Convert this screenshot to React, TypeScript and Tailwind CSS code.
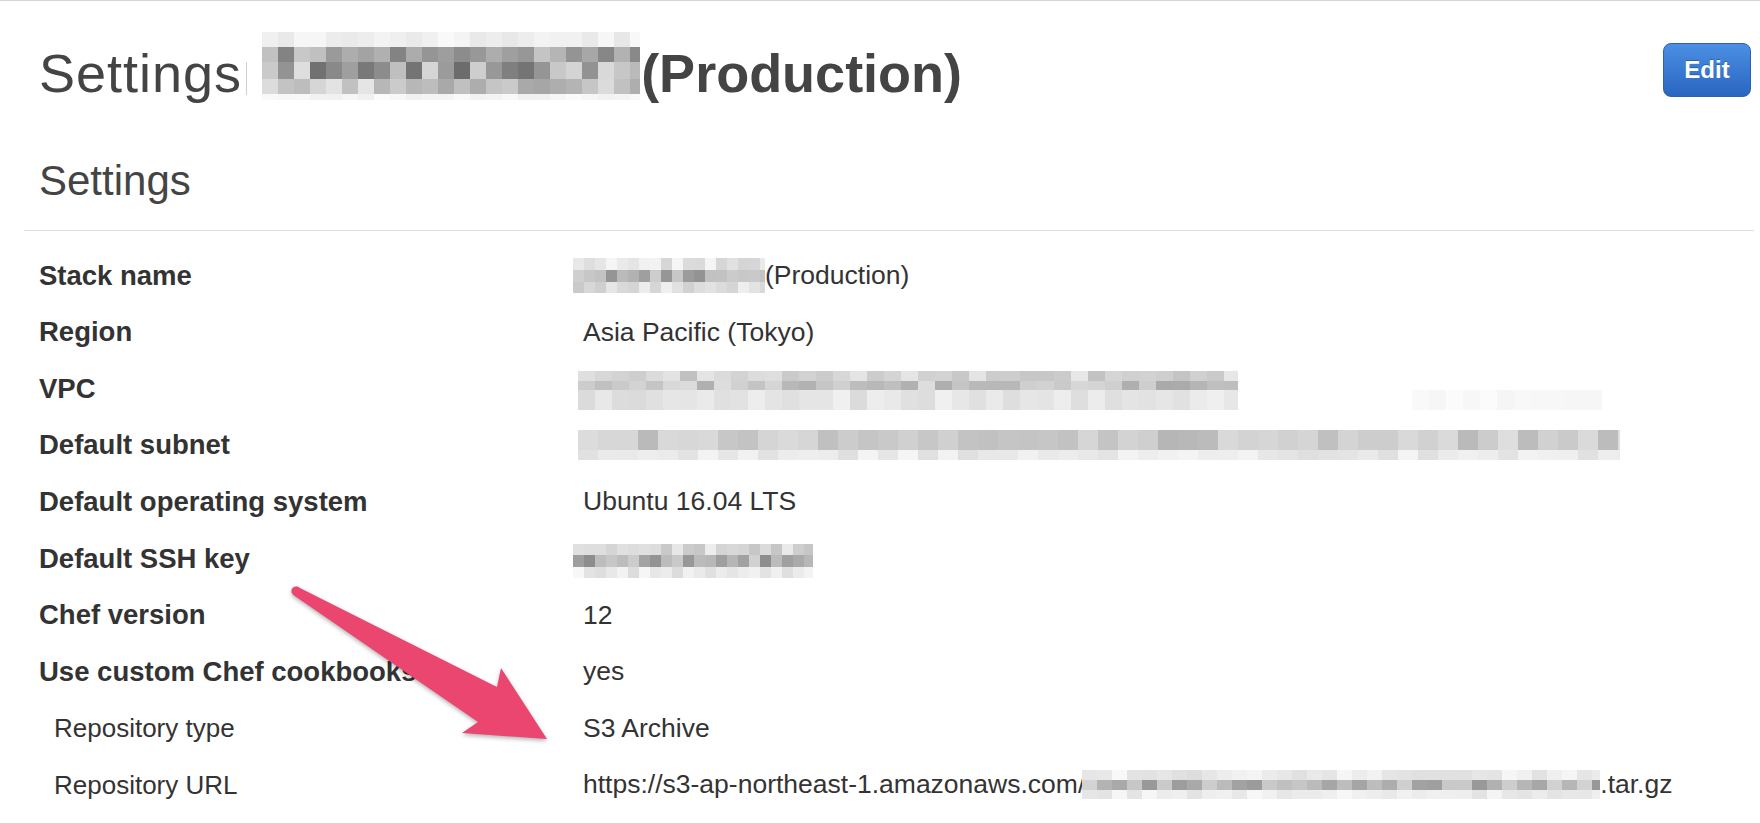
import type { CSSProperties } from 'react';

type Band = [number, number, number]; // height, lightest, darkest (0-255 gray)

// small deterministic generator so the pixelated blur looks the same each run
function makeRand(seed: number) {
  let s = seed;
  return () => {
    s = (s * 1103515245 + 12345) % 2147483648;
    return s / 2147483648;
  };
}

function Mosaic({
  width,
  cell,
  bands,
  seed,
  className,
}: {
  width: number;
  cell: number;
  bands: Band[];
  seed: number;
  className?: string;
}) {
  const rand = makeRand(seed);
  const cols = Math.ceil(width / cell);
  const box: CSSProperties = { width };
  return (
    <div className={`flex shrink-0 flex-col overflow-hidden ${className ?? ''}`} style={box}>
      {bands.map(([h, lo, hi], r) => (
        <div key={r} className="flex" style={{ height: h }}>
          {Array.from({ length: cols }).map((_, c) => {
            const v = Math.round(hi + (lo - hi) * rand());
            return (
              <div
                key={c}
                className="shrink-0"
                style={{ width: cell, height: h, backgroundColor: `rgb(${v},${v},${v})` }}
              />
            );
          })}
        </div>
      ))}
    </div>
  );
}

type Row = {
  label: string;
  sub?: boolean;
  value: React.ReactNode;
};

const rows: Row[] = [
  {
    label: 'Stack name',
    value: (
      <div className="-ml-[10px] flex items-center">
        <Mosaic
          width={192}
          cell={11}
          seed={7}
          bands={[
            [12, 245, 212],
            [12, 212, 145],
            [11, 245, 200],
          ]}
        />
        <span>(Production)</span>
      </div>
    ),
  },
  { label: 'Region', value: 'Asia Pacific (Tokyo)' },
  {
    label: 'VPC',
    value: (
      <div className="-ml-[5px] flex items-start pt-[4px]">
        <Mosaic
          width={660}
          cell={17}
          seed={21}
          bands={[
            [10, 232, 190],
            [9, 222, 170],
            [20, 240, 218],
          ]}
        />
        <Mosaic width={190} cell={17} seed={5} className="ml-[174px] mt-[19px]" bands={[[20, 252, 244]]} />
      </div>
    ),
  },
  {
    label: 'Default subnet',
    value: (
      <div className="-ml-[5px] flex">
        <Mosaic
          width={1042}
          cell={20}
          seed={33}
          bands={[
            [20, 222, 182],
            [10, 245, 222],
          ]}
        />
      </div>
    ),
  },
  { label: 'Default operating system', value: 'Ubuntu 16.04 LTS' },
  {
    label: 'Default SSH key',
    value: (
      <div className="-ml-[10px] mt-[6px] flex">
        <Mosaic
          width={240}
          cell={11}
          seed={44}
          bands={[
            [11, 240, 198],
            [12, 212, 140],
            [11, 248, 218],
          ]}
        />
      </div>
    ),
  },
  { label: 'Chef version', value: '12' },
  { label: 'Use custom Chef cookbooks', value: 'yes' },
  { label: 'Repository type', sub: true, value: 'S3 Archive' },
  {
    label: 'Repository URL',
    sub: true,
    value: (
      <div className="flex items-center">
        <span>https://s3-ap-northeast-1.amazonaws.com/</span>
        <Mosaic
          width={518}
          cell={15}
          seed={61}
          className="-ml-[3px]"
          bands={[
            [10, 248, 220],
            [10, 215, 150],
            [9, 248, 225],
          ]}
        />
        <span>.tar.gz</span>
      </div>
    ),
  },
];

function Arrow() {
  return (
    <svg
      className="pointer-events-none absolute left-0 top-[-1px] drop-shadow-[0_2px_2px_rgba(0,0,0,0.3)]"
      width={1760}
      height={824}
      viewBox="0 0 1760 824"
    >
      <polygon
        points="297,586.5 497,687 501,668 547,739 462,733 478,722 294,595.5"
        fill="#ea4670"
        strokeLinejoin="round"
      />
      <circle cx={296} cy={591} r={4.6} fill="#ea4670" />
    </svg>
  );
}

export default function App() {
  return (
    <div className="relative h-[824px] w-[1760px] overflow-hidden border-y border-[#d4d4d4] bg-white font-['Liberation_Sans',Arial,sans-serif] text-[#333]">
      {/* page header */}
      <div className="flex items-start justify-between pl-[39px] pr-[9px] pt-[42px]">
        <h1 className="mt-[3px] flex items-start text-[54px] leading-none text-[#444]">
          <span className="h-[54px] tracking-[1px]">Settings</span>
          <span className="ml-[4px] mt-[16px] h-[33px] w-px bg-[#d0d0d0]" />
          <Mosaic
            width={378}
            cell={16}
            seed={3}
            className="-mt-[14px] ml-[15px]"
            bands={[
              [15, 250, 228],
              [15, 200, 130],
              [17, 235, 100],
              [15, 230, 165],
              [6, 252, 240],
            ]}
          />
          <span className="ml-[1px] h-[54px] font-bold">(Production)</span>
        </h1>
        <button className="flex h-[54px] w-[88px] items-center justify-center rounded-[8px] border border-[#2a62b6] bg-gradient-to-b from-[#4c8fe4] to-[#2966c0] text-[24px] font-bold text-white [text-shadow:0_-1px_0_rgba(0,0,0,0.25)]">
          Edit
        </button>
      </div>

      {/* section */}
      <h2 className="ml-[39px] mt-[60px] text-[42px] leading-none text-[#444]">Settings</h2>
      <div className="ml-[24px] mr-[6px] mt-[28px] h-px bg-[#dedede]" />

      <div className="pt-[16px]">
        {rows.map((r) => (
          <div key={r.label} className="flex h-[56.6px] items-center">
            <div
              className={
                r.sub
                  ? 'w-[583px] shrink-0 pl-[54px] text-[26px] leading-none'
                  : 'w-[583px] shrink-0 pl-[39px] text-[27.5px] font-bold leading-none'
              }
            >
              {r.label}
            </div>
            <div className="text-[26.5px] leading-none">{r.value}</div>
          </div>
        ))}
      </div>

      <Arrow />
    </div>
  );
}
